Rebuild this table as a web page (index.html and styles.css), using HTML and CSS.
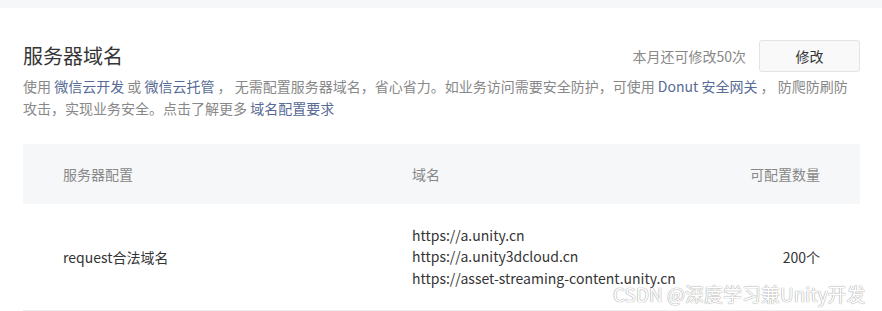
FILE: index.html
```html
<!DOCTYPE html>
<html lang="zh-CN">
<head>
<meta charset="utf-8">
<link rel="stylesheet" href="styles.css">
</head>
<body>
<div class="topband"></div>
<main class="panel">
  <div class="head">
    <h2 class="title">服务器域名</h2>
    <div class="actions">
      <span class="quota">本月还可修改50次</span>
      <button class="btn">修改</button>
    </div>
  </div>
  <p class="desc"><span>使用 <a class="link">微信云开发</a> 或 <a class="link">微信云托管</a> ， 无需配置服务器域名，省心省力。如业务访问需要安全防护，可使用 <a class="link">Donut 安全网关</a> ， 防爬防刷防</span><br><span>攻击，实现业务安全。点击了解更多 <a class="link">域名配置要求</a></span></p>
  <div class="table">
    <div class="row thead">
      <div class="c1">服务器配置</div>
      <div class="c2">域名</div>
      <div class="c3">可配置数量</div>
    </div>
    <div class="row tbody">
      <div class="c1">request合法域名</div>
      <div class="c2 urls">
        <div>https://a.unity.cn</div>
        <div>https://a.unity3dcloud.cn</div>
        <div>https://asset-streaming-content.unity.cn</div>
      </div>
      <div class="c3">200个</div>
    </div>
  </div>
</main>
<div class="watermark">CSDN @深度学习兼Unity开发</div>
</body>
</html>
```

FILE: styles.css
```css
* { box-sizing: border-box; }
html, body { margin: 0; padding: 0; background: #fff; }
body {
  font-family: "Noto Sans CJK SC", "Open Sans", sans-serif;
  color: #353535;
  width: 882px;
  height: 311px;
  overflow: hidden;
  position: relative;
}
.topband { height: 8px; background: #f6f7f9; }
.panel { padding: 32px 22px 0 23px; }
.head {
  display: flex;
  justify-content: space-between;
  align-items: center;
  height: 32px;
}
.title {
  margin: 0;
  font-size: 20px;
  font-weight: normal;
  line-height: 28px;
  color: #353535;
}
.actions { display: flex; align-items: center; gap: 13px; }
.quota { font-size: 14px; color: #888; }
.btn {
  width: 101px;
  height: 32px;
  border: 1px solid #e4e4e4;
  border-radius: 3px;
  background: #f9f9f9;
  font-family: inherit;
  font-size: 14px;
  color: #353535;
  padding: 0;
}
.desc {
  margin: 3px 0 0;
  font-size: 14px;
  line-height: 22px;
  color: #888;
  white-space: nowrap;
}
.link { color: #576b95; text-decoration: none; }
.table { margin-top: 25px; }
.row {
  display: grid;
  grid-template-columns: 349px 1fr auto;
  align-items: center;
  padding: 0 40px;
  font-size: 14px;
}
.thead { height: 60px; background: #f6f7f9; color: #888; }
.tbody { height: 107px; border-bottom: 1px solid #eee; color: #353535; }
.urls { line-height: 21.5px; }
.c3 { text-align: right; }
.watermark {
  position: absolute;
  left: 613px;
  top: 280px;
  font-size: 19px;
  color: #fff;
  text-shadow: 0 0 1px #999, 0 0 1px #999;
  white-space: nowrap;
}
```
